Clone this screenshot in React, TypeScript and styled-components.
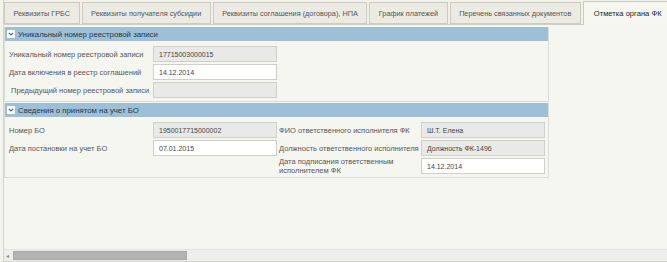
import React from 'react';
import styled, { createGlobalStyle } from 'styled-components';

const GlobalStyle = createGlobalStyle`
  html, body {
    margin: 0;
    padding: 0;
    background: #f3f3ed;
  }
  * {
    box-sizing: border-box;
  }
`;

const Page = styled.div`
  width: 664px;
  height: 262px;
  margin-left: 3px;
  border-left: 1px solid #d4d4cc;
  display: flex;
  flex-direction: column;
  font-family: "Liberation Sans", Arial, sans-serif;
  font-size: 7.5px;
  color: #555;
  overflow: hidden;
`;

const TabBar = styled.div`
  display: flex;
  align-items: flex-end;
  gap: 2px;
  height: 25px;
  padding-top: 3px;
  border-bottom: 1px solid #cfcfc6;
  background: #f1f1eb;
`;

const Tab = styled.div<{ $active?: boolean }>`
  height: ${p => (p.$active ? 24 : 22)}px;
  margin-bottom: ${p => (p.$active ? -1 : 0)}px;
  padding: 0 ${p => (p.$active ? 10 : 8.5)}px;
  display: flex;
  align-items: center;
  border: 1px solid #cbcbc2;
  border-bottom: ${p => (p.$active ? 'none' : '1px solid #cbcbc2')};
  background: ${p => (p.$active ? '#f7f7f2' : '#ebebe3')};
  color: ${p => (p.$active ? '#222' : '#555')};
  font-size: ${p => (p.$active ? 7.6 : 7.3)}px;
  white-space: nowrap;
`;

const Content = styled.div`
  flex: 1;
  background: #f6f6f1;
  padding: 2px 0 0 0;
`;

const Section = styled.div`
  width: 545px;
  border: 1px solid #dcdcd4;
  border-top: none;
  margin-bottom: 1px;
`;

const SectionHeader = styled.div`
  height: 14px;
  background: #9ec0d7;
  display: flex;
  align-items: center;
  gap: 3px;
  padding-left: 2px;
  color: #263645;
  font-size: 7.8px;
`;

const Toggle = styled.span`
  width: 8px;
  height: 8px;
  background: #fff;
  border-radius: 1px;
  display: inline-flex;
  align-items: center;
  justify-content: center;
`;

const Body = styled.div<{ $cols: string }>`
  display: grid;
  grid-template-columns: ${p => p.$cols};
  grid-auto-rows: 16px;
  row-gap: 2px;
  padding: 5px 0 3px 0;
  align-items: center;
`;

const Label = styled.div<{ $indent?: number }>`
  padding-left: ${p => p.$indent ?? 4}px;
  white-space: nowrap;
  line-height: 9px;
`;

const Field = styled.div<{ $editable?: boolean }>`
  height: 16px;
  border: 1px solid ${p => (p.$editable ? '#cfcfc8' : '#d0d0ca')};
  background: ${p => (p.$editable ? '#ffffff' : '#e9e9e7')};
  padding-left: 5px;
  display: flex;
  align-items: center;
  color: #444;
  font-size: 7px;
`;

const Scrollbar = styled.div`
  height: 13px;
  display: flex;
  align-items: center;
  gap: 3px;
  padding: 0 0 0 2px;
  background: #eeeeec;
  border-top: 1px solid #e2e2de;
  border-bottom: 1px solid #d6d6d0;
`;

const Arrow = styled.span`
  font-size: 6px;
  color: #888;
  width: 4px;
`;

const Thumb = styled.div`
  width: 174px;
  height: 9px;
  background: #b3b3b3;
  border: 1px solid #a8a8a8;
`;

function Chevron() {
  return (
    <Toggle>
      <svg width="6" height="4" viewBox="0 0 6 4">
        <path d="M0.8 0.8 L3 3 L5.2 0.8" fill="none" stroke="#3d6d99" strokeWidth="1.2" />
      </svg>
    </Toggle>
  );
}

const tabs = [
  'Реквизиты ГРБС',
  'Реквизиты получателя субсидии',
  'Реквизиты соглашения (договора), НПА',
  'График платежей',
  'Перечень связанных документов',
  'Отметка органа ФК',
];

export default function App() {
  return (
    <>
      <GlobalStyle />
      <Page>
        <TabBar>
          {tabs.map((t, i) => (
            <Tab key={t} $active={i === tabs.length - 1}>{t}</Tab>
          ))}
        </TabBar>
        <Content>
          <Section>
            <SectionHeader>
              <Chevron />
              Уникальный номер реестровой записи
            </SectionHeader>
            <Body $cols="148px 124px">
              <Label>Уникальный номер реестровой записи</Label>
              <Field>17715003000015</Field>
              <Label>Дата включения в реестр соглашений</Label>
              <Field $editable>14.12.2014</Field>
              <Label $indent={6}>Предыдущий номер реестровой записи</Label>
              <Field />
            </Body>
          </Section>
          <Section>
            <SectionHeader>
              <Chevron />
              Сведения о принятом на учет БО
            </SectionHeader>
            <Body $cols="148px 124px 144px 124px">
              <Label>Номер БО</Label>
              <Field>1950017715000002</Field>
              <Label $indent={2}>ФИО ответственного исполнителя ФК</Label>
              <Field>Ш.Т. Елена</Field>
              <Label>Дата постановки на учет БО</Label>
              <Field $editable>07.01.2015</Field>
              <Label $indent={2}>Должность ответственного исполнителя</Label>
              <Field>Должность ФК-1496</Field>
              <span />
              <span />
              <Label $indent={2}>Дата подписания ответственным<br />исполнителем ФК</Label>
              <Field $editable>14.12.2014</Field>
            </Body>
          </Section>
        </Content>
        <Scrollbar>
          <Arrow>◂</Arrow>
          <Thumb />
        </Scrollbar>
      </Page>
    </>
  );
}
